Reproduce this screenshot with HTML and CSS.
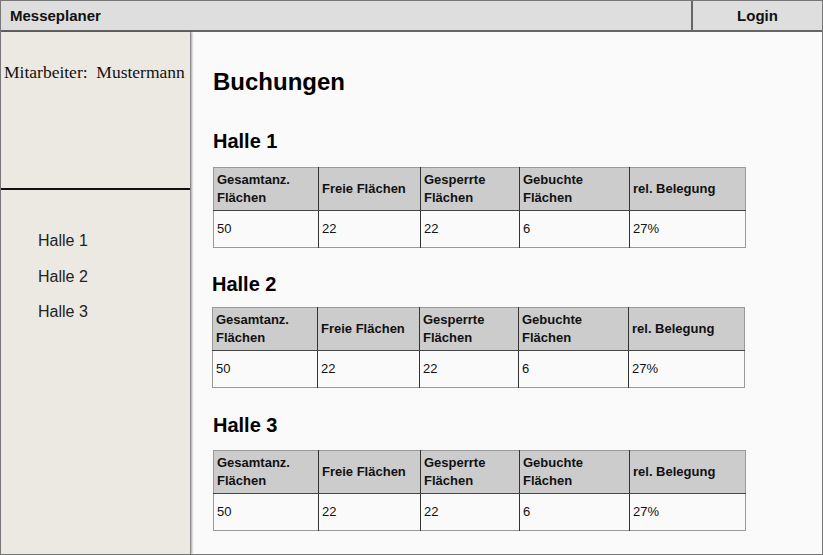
FILE: index.html
```html
<!DOCTYPE html>
<html lang="de">
<head>
<meta charset="utf-8">
<title>Messeplaner</title>
<link rel="stylesheet" href="styles.css">
</head>
<body>
<div class="app">
  <header class="topbar">
    <div class="brand">Messeplaner</div>
    <div class="login">Login</div>
  </header>
  <div class="body">
    <aside class="sidebar">
      <div class="user">Mitarbeiter:&nbsp; Mustermann</div>
      <nav class="nav">
        <div class="nav-item">Halle 1</div>
        <div class="nav-item">Halle 2</div>
        <div class="nav-item">Halle 3</div>
      </nav>
    </aside>
    <main class="main">
      <h1 class="title">Buchungen</h1>
      <section class="hall hall-1">
        <h2 class="hall-title">Halle 1</h2>
        <table class="stats">
          <colgroup><col class="c1"><col class="c2"><col class="c3"><col class="c4"><col class="c5"></colgroup>
          <tr><th>Gesamtanz.<br>Flächen</th><th>Freie Flächen</th><th>Gesperrte<br>Flächen</th><th>Gebuchte<br>Flächen</th><th>rel. Belegung</th></tr>
          <tr><td>50</td><td>22</td><td>22</td><td>6</td><td>27%</td></tr>
        </table>
      </section>
      <section class="hall hall-2">
        <h2 class="hall-title">Halle 2</h2>
        <table class="stats">
          <colgroup><col class="c1"><col class="c2"><col class="c3"><col class="c4"><col class="c5"></colgroup>
          <tr><th>Gesamtanz.<br>Flächen</th><th>Freie Flächen</th><th>Gesperrte<br>Flächen</th><th>Gebuchte<br>Flächen</th><th>rel. Belegung</th></tr>
          <tr><td>50</td><td>22</td><td>22</td><td>6</td><td>27%</td></tr>
        </table>
      </section>
      <section class="hall hall-3">
        <h2 class="hall-title">Halle 3</h2>
        <table class="stats">
          <colgroup><col class="c1"><col class="c2"><col class="c3"><col class="c4"><col class="c5"></colgroup>
          <tr><th>Gesamtanz.<br>Flächen</th><th>Freie Flächen</th><th>Gesperrte<br>Flächen</th><th>Gebuchte<br>Flächen</th><th>rel. Belegung</th></tr>
          <tr><td>50</td><td>22</td><td>22</td><td>6</td><td>27%</td></tr>
        </table>
      </section>
    </main>
  </div>
</div>
</body>
</html>
```
FILE: styles.css
```css
* { box-sizing: border-box; }
html, body { margin: 0; padding: 0; }
body {
  font-family: "Liberation Sans", Arial, sans-serif;
  color: #111;
  background: #fafafa;
}
.app {
  width: 823px;
  height: 555px;
  border: 1px solid #777;
  display: flex;
  flex-direction: column;
  overflow: hidden;
}
.topbar {
  height: 31px;
  flex: none;
  display: flex;
  background: #dedede;
  border-bottom: 2px solid #666;
}
.brand {
  flex: 1;
  padding-left: 9px;
  font-weight: bold;
  font-size: 15px;
  line-height: 29px;
}
.login {
  width: 131px;
  border-left: 2px solid #666;
  text-align: center;
  font-weight: bold;
  font-size: 15px;
  line-height: 29px;
}
.body {
  flex: 1;
  display: flex;
  min-height: 0;
}
.sidebar {
  width: 190px;
  flex: none;
  background: #ece9e3;
  border-right: 1px solid #8a8a8a;
  box-shadow: 1px 0 2px rgba(0,0,0,0.35);
  position: relative;
  z-index: 1;
}
.user {
  height: 158px;
  border-bottom: 2px solid #111;
  padding: 30px 0 0 3px;
  font-family: "Liberation Serif", "Times New Roman", serif;
  font-size: 17.5px;
  line-height: 20px;
  white-space: nowrap;
  color: #111;
}
.nav {
  padding: 33px 0 0 37px;
}
.nav-item {
  font-size: 16px;
  line-height: 35.5px;
  color: #222;
}
.main {
  flex: 1;
  background: #fafafa;
  padding: 0 0 0 22px;
}
.title {
  margin: 36px 0 0;
  font-size: 24px;
  line-height: 28px;
  font-weight: bold;
  color: #000;
}
.hall-title {
  margin: 0 0 13px;
  font-size: 20px;
  line-height: 24px;
  font-weight: bold;
  color: #000;
}
.hall-1 { margin-top: 33px; }
.hall-1 .hall-title { margin-bottom: 14px; }
.hall-2 { margin-top: 24px; margin-left: -1px; }
.hall-2 .hall-title { margin-bottom: 11px; }
.hall-3 { margin-top: 25px; }
.stats {
  width: 532px;
  table-layout: fixed;
  border-collapse: collapse;
  border: 1px solid #999;
  font-size: 13px;
  background: #fafafa;
}
.c1 { width: 105px; }
.c2 { width: 102px; }
.c3 { width: 99px; }
.c4 { width: 110px; }
.c5 { width: 116px; }
.stats th {
  background: #cccccc;
  text-align: left;
  font-weight: bold;
  padding: 3px 3px;
  line-height: 18px;
  height: 43px;
  border-bottom: 1px solid #444;
  color: #111;
}
.stats td {
  padding: 0 3px;
  height: 37px;
  line-height: 16px;
  font-weight: normal;
  color: #111;
}
.stats th + th, .stats td + td {
  border-left: 1px solid #333;
}
```
